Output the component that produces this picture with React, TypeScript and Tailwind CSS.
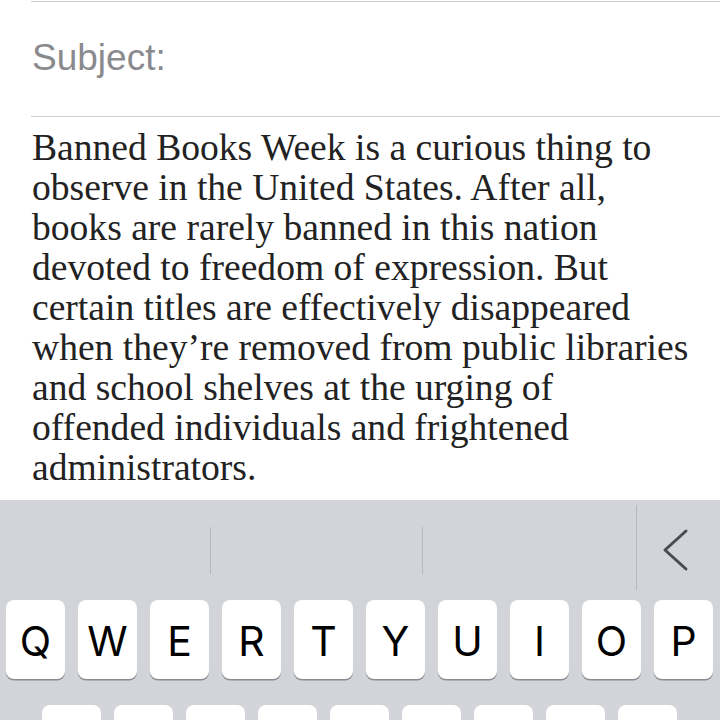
import React from "react";

const bodyLines = [
  "Banned Books Week is a curious thing to",
  "observe in the United States. After all,",
  "books are rarely banned in this nation",
  "devoted to freedom of expression. But",
  "certain titles are effectively disappeared",
  "when they\u2019re removed from public libraries",
  "and school shelves at the urging of",
  "offended individuals and frightened",
  "administrators.",
];

const topRow = ["Q", "W", "E", "R", "T", "Y", "U", "I", "O", "P"];
const homeRowCount = 9;

function Key({ label }: { label?: string }) {
  return (
    <div className="w-[59px] h-[79px] shrink-0 rounded-[8px] bg-white shadow-[0_1.5px_0_#898b90] flex items-center justify-center">
      {label && (
        <span
          className="text-[41px] leading-none text-black pt-[3px]"
          style={{ fontFamily: "Inter, 'Liberation Sans', sans-serif" }}
        >
          {label}
        </span>
      )}
    </div>
  );
}

export default function App() {
  return (
    <div className="w-[720px] h-[720px] overflow-hidden bg-white flex flex-col">
      {/* header fields */}
      <div className="pl-[31px] pt-px shrink-0">
        <div className="h-px bg-[#cfcfd3]" />
        <div className="h-[114px] flex items-center">
          <span
            className="text-[37px] leading-none text-[#8a8a8e] pl-px pb-[3px]"
            style={{ fontFamily: "'Liberation Sans', Arial, sans-serif" }}
          >
            Subject:
          </span>
        </div>
        <div className="h-px bg-[#cfcfd3]" />
      </div>

      {/* message body */}
      <div
        className="pl-[32px] pt-[11px] h-[383px] shrink-0 text-[37.6px] leading-[40px] text-[#222222]"
        style={{ fontFamily: "'Liberation Serif', serif" }}
      >
        {bodyLines.map((line) => (
          <div key={line} className="whitespace-nowrap">
            {line}
          </div>
        ))}
      </div>

      {/* keyboard */}
      <div className="flex-1 min-h-0 overflow-hidden bg-[#d2d4d9] flex flex-col">
        <div className="h-[100px] shrink-0 flex items-center">
          <div className="w-[210px]" />
          <div className="w-px h-[47px] bg-[#b6b8bd]" />
          <div className="w-[211px]" />
          <div className="w-px h-[47px] bg-[#b6b8bd]" />
          <div className="w-[213px]" />
          <div className="w-px h-[85px] self-start mt-[5px] bg-[#b6b8bd]" />
          <div className="flex-1 flex items-center justify-center pr-[6px]">
            <svg width="30" height="44" viewBox="0 0 30 44" fill="none">
              <polyline
                points="25,3 4,22 25,41"
                stroke="#4a4b50"
                strokeWidth="3"
                strokeLinecap="round"
                strokeLinejoin="round"
              />
            </svg>
          </div>
        </div>
        <div className="flex gap-[13px] pl-[6px] shrink-0">
          {topRow.map((k) => (
            <Key key={k} label={k} />
          ))}
        </div>
        <div className="flex gap-[13px] pl-[42px] mt-[26px] shrink-0">
          {Array.from({ length: homeRowCount }).map((_, i) => (
            <Key key={i} />
          ))}
        </div>
      </div>
    </div>
  );
}
